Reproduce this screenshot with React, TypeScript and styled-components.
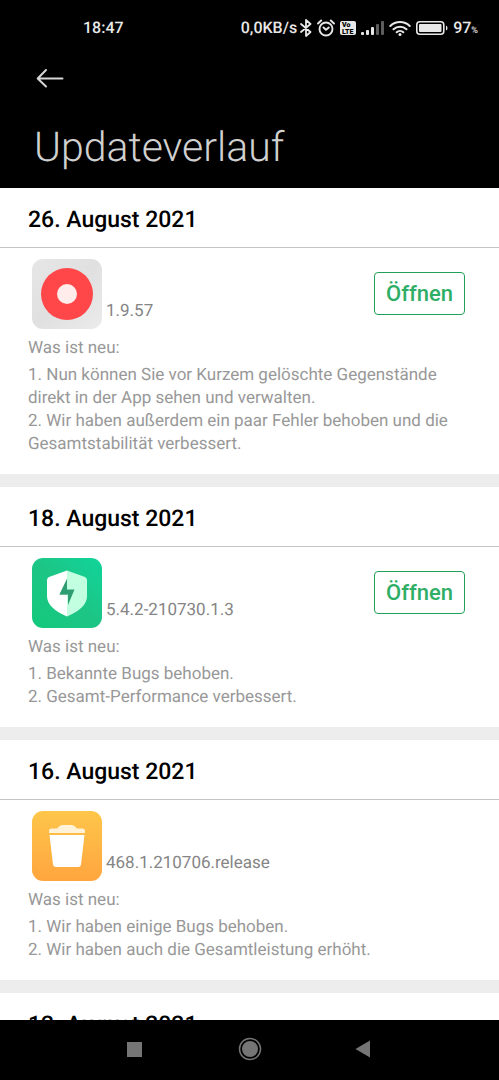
import React from "react";
import styled, { createGlobalStyle } from "styled-components";

const GlobalStyle = createGlobalStyle`
  *, *::before, *::after { box-sizing: border-box; }
  body {
    margin: 0;
    background: #000;
    font-family: Roboto, "Noto Sans", sans-serif;
    text-rendering: geometricPrecision;
  }
  h1, h2, p, ol { margin: 0; padding: 0; }
  button { font-family: inherit; cursor: pointer; }
  svg { display: block; }
`;

const Screen = styled.div`
  display: flex;
  flex-direction: column;
  height: 100vh;
  background: #fff;
`;

const StatusBar = styled.div`
  display: flex;
  align-items: center;
  justify-content: space-between;
  height: 56px;
  padding: 0 21px 0 83px;
  color: #e8e8e8;
  font-size: 16px;
  font-weight: 500;
  line-height: 20px;
`;

const StatusGroup = styled.div`
  display: flex;
  align-items: center;
  gap: 5px;
`;

const NetworkSpeed = styled.div`
  display: flex;
  align-items: center;
  gap: 3px;
`;

const BatteryLevel = styled.span`
  display: flex;
  align-items: baseline;
`;

const Percent = styled.span`
  font-size: 9px;
  line-height: 12px;
`;

const Header = styled.header`
  flex: none;
  background: #000;
`;

const BackButton = styled.button`
  display: flex;
  align-items: center;
  height: 44px;
  margin-left: 36px;
  padding: 0;
  border: 0;
  background: none;
  color: #d6d6d6;
`;

const PageTitle = styled.h1`
  padding: 22px 34px 14px;
  color: #d0d0d0;
  font-size: 41px;
  font-weight: 300;
  line-height: 52px;
`;

const History = styled.main`
  display: flex;
  flex: 1;
  flex-direction: column;
  gap: 13px;
  min-height: 0;
  overflow: hidden;
  background: #ededed;
`;

const Entry = styled.section`
  flex: none;
  background: #fff;
`;

const EntryDate = styled.h2`
  height: 60px;
  padding: 4px 28px 0;
  border-bottom: 1px solid #c4c4c4;
  color: #000;
  font-size: 23px;
  font-weight: 500;
  line-height: 55px;
`;

const EntryBody = styled.div`
  padding: 11px 28px 18px;
  color: #989898;
  font-size: 17px;
  line-height: 23px;
`;

const AppRow = styled.div`
  display: flex;
  gap: 4px;
  height: 70px;
  padding: 0 6px 0 4px;
`;

const Version = styled.span`
  flex: 1;
  align-self: flex-end;
  padding-bottom: 6px;
  color: #858585;
`;

const OpenButton = styled.button`
  width: 91px;
  height: 43px;
  margin-top: 13px;
  padding: 0;
  border: 1px solid #22a058;
  border-radius: 4px;
  background: #fff;
  color: #2fae66;
  font-size: 22px;
  font-weight: 500;
`;

const NewsLabel = styled.p`
  margin: 8px 0 4px;
`;

const NewsList = styled.ol`
  list-style: none;
`;

const NavBar = styled.nav`
  display: flex;
  flex: none;
  align-items: center;
  justify-content: center;
  gap: 75px;
  height: 60px;
  padding-bottom: 2px;
  background: #000;
`;

const NavButton = styled.button`
  display: grid;
  place-items: center;
  width: 40px;
  height: 40px;
  padding: 0;
  border: 0;
  background: none;
  color: #757575;
`;

const BluetoothIcon = () => (
  <svg width="12" height="18" viewBox="0 0 12 18" fill="none" stroke="currentColor" strokeWidth="1.800" strokeLinejoin="round" strokeLinecap="round">
    <path d="M1 5l9.500 8L6 17V1l4.500 4L1 13" />
  </svg>
);

const AlarmIcon = () => (
  <svg width="18" height="18" viewBox="0 0 18 18" fill="none" stroke="currentColor" strokeWidth="1.900" strokeLinecap="round">
    <circle cx="9" cy="10" r="6.500" />
    <path d="M6.500 8.500L9 10.700l2.800-2.200M1 4.500l3.200-3M17 4.500l-3.200-3" />
  </svg>
);

const VolteIcon = () => (
  <svg width="16" height="14" viewBox="0 0 16 14">
    <rect width="16" height="14" rx="2" fill="currentColor" />
    <g fill="#000" fontSize="7" fontWeight="900">
      <text x="2" y="6">Vo</text>
      <text x="2" y="13">LTE</text>
    </g>
  </svg>
);

const SignalIcon = () => (
  <svg width="23" height="14" viewBox="0 0 23 14" fill="currentColor">
    <rect x="0" y="11" width="3" height="3" rx="1" />
    <rect x="5" y="9" width="3" height="5" rx="1" />
    <rect x="10" y="6" width="3" height="8" rx="1" />
    <rect x="15" y="3" width="3" height="11" rx="1" opacity=".4" />
    <rect x="20" y="0" width="3" height="14" rx="1" opacity=".4" />
  </svg>
);

const WifiIcon = () => (
  <svg width="22" height="15" viewBox="0 0 22 15" fill="none" stroke="currentColor" strokeWidth="2" strokeLinecap="round">
    <path d="M1.300 5a14 14 0 0 1 19.400 0M4.500 8.300a9.300 9.300 0 0 1 13 0M7.700 11.300a4.800 4.800 0 0 1 6.600 0" />
    <circle cx="11" cy="13.400" r="1.500" fill="currentColor" stroke="none" />
  </svg>
);

const BatteryIcon = () => (
  <svg width="32" height="14" viewBox="0 0 32 14">
    <rect x=".8" y=".8" width="27" height="12.400" rx="3" fill="none" stroke="currentColor" strokeWidth="1.600" />
    <rect x="3" y="3" width="22.500" height="8" rx="1" fill="currentColor" />
    <path d="M30 4.500q1.500.5 1.500 2.500T30 9.500z" fill="currentColor" />
  </svg>
);

const BackIcon = () => (
  <svg width="28" height="20" viewBox="0 0 28 20" fill="none" stroke="currentColor" strokeWidth="2" strokeLinecap="round" strokeLinejoin="round">
    <path d="M26.500 10.500H2M10 2L1.700 10.500l8.300 8" />
  </svg>
);

const RecorderLogo = () => (
  <svg width="70" height="70" viewBox="0 0 70 70" role="img" aria-label="Recorder">
    <defs>
      <linearGradient id="recorder" x1="0" y1="0" x2="1" y2="1">
        <stop offset="0" stopColor="#e6e6e6" />
        <stop offset=".5" stopColor="#e0e0e0" />
        <stop offset="1" stopColor="#ebebeb" />
      </linearGradient>
    </defs>
    <rect width="70" height="70" rx="11" fill="url(#recorder)" />
    <circle cx="35" cy="35" r="26" fill="#ff4649" />
    <circle cx="35" cy="35" r="10" fill="#ffeceb" />
  </svg>
);

const SecurityLogo = () => (
  <svg width="70" height="70" viewBox="0 0 70 70" role="img" aria-label="Security">
    <defs>
      <linearGradient id="security" x1="0" y1="1" x2="1" y2="0">
        <stop offset="0" stopColor="#12c97c" />
        <stop offset=".5" stopColor="#1dc585" />
        <stop offset="1" stopColor="#10d49a" />
      </linearGradient>
    </defs>
    <rect width="70" height="70" rx="11" fill="url(#security)" />
    <path d="M35 12.500L17 19q-2 .8-2 3v16q0 12 20 20.500z" fill="#fff" />
    <path d="M35 12.500L53 19q2 .8 2 3v16q0 12-20 20.500z" fill="#c2ffe0" />
    <path d="M35 21L27.500 36.500H35z" fill="#47a982" />
    <path d="M35 21v10.500h7.500L36 47v-10.500h-8.500z" fill="#2f9d72" />
  </svg>
);

const CleanerLogo = () => (
  <svg width="70" height="70" viewBox="0 0 70 70" role="img" aria-label="Cleaner">
    <defs>
      <linearGradient id="cleaner" x1="0" y1="0" x2="0" y2="1">
        <stop offset="0" stopColor="#fec64a" />
        <stop offset="1" stopColor="#ffa53f" />
      </linearGradient>
    </defs>
    <rect width="70" height="70" rx="11" fill="url(#cleaner)" />
    <path d="M17 22v-2q0-2.500 2.500-2.500H25q2.500-3.500 5-3.500h10q2.500 0 5 3.500h5.500q2.500 0 2.500 2.500v2z" fill="#fff2d6" />
    <path d="M17.500 24h35L49 53.500q-.4 2.500-3 2.500H24q-2.600 0-3-2.500z" fill="#fff" />
  </svg>
);

type Update = {
  date: string;
  version?: string;
  logo?: React.ReactNode;
  canOpen?: boolean;
  news?: string[];
};

const updates: Update[] = [
  {
    date: "26. August 2021",
    version: "1.9.57",
    logo: <RecorderLogo />,
    canOpen: true,
    news: [
      "1. Nun können Sie vor Kurzem gelöschte Gegenstände direkt in der App sehen und verwalten.",
      "2. Wir haben außerdem ein paar Fehler behoben und die Gesamtstabilität verbessert.",
    ],
  },
  {
    date: "18. August 2021",
    version: "5.4.2-210730.1.3",
    logo: <SecurityLogo />,
    canOpen: true,
    news: ["1. Bekannte Bugs behoben.", "2. Gesamt-Performance verbessert."],
  },
  {
    date: "16. August 2021",
    version: "468.1.210706.release",
    logo: <CleanerLogo />,
    news: ["1. Wir haben einige Bugs behoben.", "2. Wir haben auch die Gesamtleistung erhöht."],
  },
  { date: "12. August 2021" },
];

export default function App() {
  return (
    <Screen>
      <GlobalStyle />
      <Header>
        <StatusBar>
          <span>18:47</span>
          <StatusGroup>
            <NetworkSpeed>
              <span>0,0KB/s</span>
              <BluetoothIcon />
            </NetworkSpeed>
            <AlarmIcon />
            <VolteIcon />
            <SignalIcon />
            <WifiIcon />
            <BatteryIcon />
            <BatteryLevel>
              97<Percent>%</Percent>
            </BatteryLevel>
          </StatusGroup>
        </StatusBar>
        <BackButton aria-label="Zurück">
          <BackIcon />
        </BackButton>
        <PageTitle>Updateverlauf</PageTitle>
      </Header>
      <History>
        {updates.map((u) => (
          <Entry key={u.date}>
            <EntryDate>{u.date}</EntryDate>
            {u.news && (
              <EntryBody>
                <AppRow>
                  {u.logo}
                  <Version>{u.version}</Version>
                  {u.canOpen && <OpenButton>Öffnen</OpenButton>}
                </AppRow>
                <NewsLabel>Was ist neu:</NewsLabel>
                <NewsList>
                  {u.news.map((n) => (
                    <li key={n}>{n}</li>
                  ))}
                </NewsList>
              </EntryBody>
            )}
          </Entry>
        ))}
      </History>
      <NavBar>
        <NavButton aria-label="Letzte Apps">
          <svg width="15" height="15" viewBox="0 0 15 15">
            <rect width="15" height="15" fill="currentColor" />
          </svg>
        </NavButton>
        <NavButton aria-label="Startseite">
          <svg width="24" height="24" viewBox="0 0 24 24">
            <circle cx="12" cy="12" r="10.500" fill="none" stroke="currentColor" strokeWidth="1.500" />
            <circle cx="12" cy="12" r="8" fill="currentColor" />
          </svg>
        </NavButton>
        <NavButton aria-label="Zurück">
          <svg width="20" height="18" viewBox="0 0 20 18">
            <path d="M15 .5v17L.5 9z" fill="currentColor" />
          </svg>
        </NavButton>
      </NavBar>
    </Screen>
  );
}
